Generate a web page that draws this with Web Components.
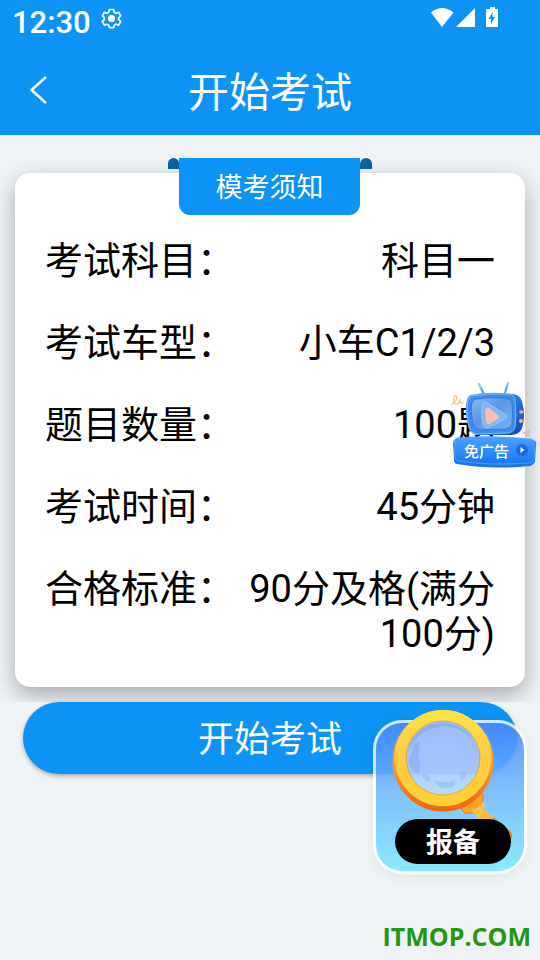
<!DOCTYPE html>
<html lang="zh-CN">
<head>
<meta charset="utf-8">
<meta name="viewport" content="width=device-width, initial-scale=1">
<title>开始考试</title>
<style>
  body { margin: 0; background: #eff3f5; font-family: Roboto, "Noto Sans CJK SC", sans-serif; color: #000; }
</style>
</head>
<body>
<exam-page></exam-page>
<script>
const define = (name, html) => customElements.define(name, class extends HTMLElement {
  constructor() {
    super();
    const t = document.createElement('template');
    t.innerHTML = '<style>*{box-sizing:border-box}button{font:inherit;color:inherit;border:0;background:none;padding:0;margin:0;cursor:pointer}svg{display:block}</style>' + html;
    this.attachShadow({ mode: 'open' }).append(t.content.cloneNode(true));
  }
});

define('status-bar', `
<style>
  :host { display: flex; height: 45px; padding: 0 42px 0 12px; justify-content: space-between; align-items: flex-start; background: #0c93f5; color: #fff; }
  .side { display: flex; }
  time { font-size: 31px; font-weight: 500; line-height: 46px; }
  .gear { margin: 8px 0 0 10px; }
</style>
<div class="side">
  <time>12:30</time>
  <svg class="gear" width="21" height="21" viewBox="0 0 21 21" fill="none" stroke="#fff" stroke-width="1.7" stroke-linejoin="round">
    <path d="M8.3 1.5h4.4l.5 2.7 1.8 1 2.6-.9 2.1 3.6-2 1.8v2l2 1.8-2.1 3.6-2.6-.9-1.8 1-.5 2.5H8.3l-.5-2.5-1.8-1-2.6.9-2.1-3.6 2-1.8v-2l-2-1.8 2.1-3.6 2.6.9 1.8-1z"/>
    <circle cx="10.5" cy="10.6" r="3.5" fill="#fff" stroke="none"/>
  </svg>
</div>
<svg width="68" height="28" viewBox="0 0 68 28" fill="#fff" role="img" aria-label="信号与电量">
  <path d="M1 12.5Q12 3.500 23.500 12.500L12 27z"/>
  <path d="M26 27L45 8V27z"/>
  <path fill-rule="evenodd" d="M57 9h3V7h5v2h3v18H56V10q0-1 1-1zM62.500 12l-4 7h2.500v5l4-7h-2.500z"/>
</svg>`);

define('title-bar', `
<style>
  :host { display: grid; grid-template-columns: 76px 1fr 76px; align-items: center; height: 90px; background: #0c93f5; color: #fff; }
  h1 { margin: 0; padding-top: 6px; text-align: center; font-size: 41px; font-weight: 400; line-height: 60px; }
  button { display: grid; place-items: center; height: 60px; }
</style>
<button type="button" aria-label="返回"><svg width="18" height="28" viewBox="0 0 18 28" fill="none" stroke="#fff" stroke-width="2.500"><path d="M17 1L2.500 14 17 27"/></svg></button>
<h1><slot></slot></h1>`);

define('ribbon-heading', `
<style>
  :host { display: grid; grid-template-columns: 11px 181px 12px; justify-content: center; }
  h2 { margin: 0; padding-top: 3px; border-radius: 0 0 11px 11px; background: #0c93f5; color: #fff; text-align: center; font-size: 27px; font-weight: 400; line-height: 54px; }
  i { height: 11px; background: linear-gradient(90deg, #0866a8, #055d9b); }
  .l { border-radius: 6px 6px 0 0; } .r { border-radius: 6px 6px 0 0; }
</style>
<i class="l"></i><h2><slot></slot></h2><i class="r"></i>`);

define('info-row', `
<style>
  :host { display: block; }
  dl { display: flex; justify-content: space-between; gap: 12px; margin: 0; font-size: 38px; line-height: 45px; }
  dt { flex: none; } dd { margin: 0; text-align: right; }
</style>
<dl><dt><slot name="label"></slot></dt><dd><slot></slot></dd></dl>`);

define('notice-card', `
<style>
  :host { display: block; padding: 38px 15px 15px; overflow: hidden; }
  section { display: flow-root; border-radius: 15px; background: #fff; box-shadow: 0 8px 22px rgba(0,0,0,.3); padding: 0 30px 30px; }
  .head { margin: -15px 0 24px; }
  .rows { display: grid; gap: 37px; }
</style>
<section>
  <div class="head"><slot name="heading"></slot></div>
  <div class="rows"><slot></slot></div>
</section>`);

define('start-button', `
<style>
  :host { display: block; padding: 0 23px; }
  button { width: 100%; padding-top: 4px; border-radius: 36px; background: #0c93f5; color: #fff; font-size: 36px; line-height: 68px; box-shadow: 0 2px 4px rgba(0,0,0,.3); }
</style>
<button type="button"><slot></slot></button>`);

define('ad-free', `
<style>
  :host { display: block; width: 88px; }
  button { display: grid; width: 100%; }
  svg, span { grid-area: 1 / 1; }
  span { align-self: end; justify-self: start; padding: 0 0 6px 13px; color: #fff; font-size: 15px; font-weight: 500; line-height: 20px; }
</style>
<button type="button">
<svg width="88" height="90" viewBox="0 0 88 90" aria-hidden="true">
  <defs>
    <linearGradient id="tv" x1="0" y1="0" x2="1" y2="1"><stop offset="0" stop-color="#62b5fa"/><stop offset=".5" stop-color="#2878ed"/><stop offset="1" stop-color="#1745b6"/></linearGradient>
    <linearGradient id="glass" x1="0" y1="0" x2="1" y2="1"><stop offset="0" stop-color="#8bbcf6"/><stop offset=".45" stop-color="#5c95e6"/><stop offset="1" stop-color="#7ab3f5"/></linearGradient>
    <linearGradient id="sign" x1="0" y1="0" x2="0" y2="1"><stop offset="0" stop-color="#4aa2ff"/><stop offset="1" stop-color="#1877ef"/></linearGradient>
  </defs>
  <g fill="none" stroke-linecap="round">
    <path d="M34 18L28 6M53 18l4-13" stroke="#569ee9" stroke-width="2"/>
    <path d="M28 6l2 3M57 5l-1 2" stroke="#a6d1f6" stroke-width="2"/>
    <path d="M1 26c4-2 6-7 4-8s-4 7-1 8 5-2 5-5c-1 4 1 5 4 3" stroke="#efc97c" stroke-width="1.300"/>
    <path d="M72 55l7-3-3 6-1-3zM76 58l3-1" stroke="#f5aaa6"/>
  </g>
  <path d="M19 17Q38 13 62 16 69 17 71 23 75 39 71 50 69 56 61 57L26 57Q19 56 17 48 13 30 16 22 16 19 19 17z" fill="url(#tv)"/>
  <path d="M20 18Q38 15 58 16 64 17 64 23 66 38 64 49 63 54 57 55L27 56Q20 56 18 49 15 33 17 23z" fill="#3f8cf0" stroke="#7fbaf7"/>
  <path d="M24 21Q38 19 55 20 60 21 61 25 62 37 61 46 60 50 55 51L29 52Q24 51 22 46 19 31 21 25z" fill="url(#glass)" stroke="#3576d6"/>
  <path d="M31 27Q32 23 36 25L54 36Q58 38 54 41L37 50Q34 51 32 47 30 38 31 27z" fill="#82b5f5" stroke="#9bc9fa"/>
  <path d="M34 33Q35 28 38 30L47 37Q49 39 47 41L39 46Q36 47 35 43z" fill="#f8bdb4"/>
  <circle cx="70" cy="34" r="2" fill="#ef849c"/><circle cx="71" cy="34" r="1" fill="#ffd3c7"/>
  <circle cx="70" cy="43" r="2" fill="#f8bd72"/>
  <path d="M5 61Q38 56 82 62 86 63 85 67L84 83Q83 87 79 88 40 92 6 86 3 85 3 82L2 66Q2 62 5 61z" fill="#1c74e9"/>
  <path d="M6 60Q38 57 80 61 84 62 84 66L83 80Q83 84 78 85 38 88 7 83 4 82 4 79L3 65Q3 61 6 60z" fill="url(#sign)" stroke="#55a7ff" stroke-width=".8"/>
  <circle cx="71" cy="72" r="6" fill="#176cdb"/><path d="M69.500 69l4 3-4 3z" fill="#fff"/>
</svg>
<span>免广告</span>
</button>`);

define('report-float', `
<style>
  :host { display: block; width: 154px; }
  button { display: grid; width: 100%; height: 164px; }
  svg, .tile, .label { grid-area: 1 / 1; }
  .tile { align-self: end; height: 154px; border: 3px solid rgba(255,255,255,.8); border-radius: 29px; background: linear-gradient(rgba(75,135,255,.88), rgba(110,185,255,.86) 48%, rgba(133,232,255,.96)); background-clip: padding-box; box-shadow: 0 3px 12px rgba(0,0,0,.06); }
  .label { align-self: end; justify-self: start; margin: 0 0 10px 22px; padding-top: 3px; width: 116px; height: 45px; border-radius: 23px; background: #000; color: #fff; font-size: 27px; font-weight: 700; line-height: 42px; text-align: center; z-index: 1; }
</style>
<button type="button">
<span class="tile"></span>
<svg width="154" height="164" viewBox="0 0 154 164" aria-hidden="true">
  <defs>
    <linearGradient id="rim" x1="0" y1="0" x2="0" y2="1"><stop offset="0" stop-color="#ffe044"/><stop offset=".5" stop-color="#ffcb45"/><stop offset="1" stop-color="#ffd036"/></linearGradient>
    <linearGradient id="edge" x1="0" y1="0" x2="0" y2="1"><stop offset="0" stop-color="#ffd630"/><stop offset=".55" stop-color="#f99a20"/><stop offset="1" stop-color="#ee640d"/></linearGradient>
    <linearGradient id="lens" x1="0" y1="0" x2="0" y2="1"><stop offset="0" stop-color="#9bbcfb"/><stop offset=".69" stop-color="#a4c5fb"/><stop offset=".7" stop-color="#b1d4fe"/><stop offset="1" stop-color="#b6e0ff"/></linearGradient>
    <linearGradient id="handle" x1="0" y1="0" x2="1" y2="1"><stop offset="0" stop-color="#ffcd48"/><stop offset="1" stop-color="#fa8616"/></linearGradient>
  </defs>
  <path d="M88 99L109 83Q112 90 107 97 101 105 92 103z" fill="#fba52c" stroke="#ed7510"/>
  <path d="M98 100Q105 99 110 92L112 96Q108 102 101 104z" fill="#ffc24b"/>
  <path d="M102 102Q106 102 109 98L137 121Q140 124 139 128L135 132 106 112z" fill="url(#handle)"/>
  <path d="M120 107L137 121Q140 124 139 128 136 124 120 113z" fill="#fd7f12"/>
  <circle cx="70" cy="51" r="50.500" fill="url(#edge)"/>
  <circle cx="70" cy="48" r="42.500" fill="url(#lens)" stroke="url(#rim)" stroke-width="11.500"/>
  <circle cx="70" cy="48" r="37" fill="none" stroke="#e78c31" stroke-opacity=".65"/>
  <path d="M35 43Q40 14 70 13 98 14 106 45 99 18 72 16 44 18 35 43z" fill="#7394d9" opacity=".4"/>
  <path d="M41 34q5-6 6-1-3 11 0 19 1 12-3 11-9-5-8-14 4-8 5-15z" fill="#7da5ed" opacity=".45"/>
  <path d="M49 65q8-2 9 6-7 2-9-6zM61 70q11 4 21 0 2 7-6 8-11 2-15-8zM87 64q5-6 6 1-2 7-6 4z" fill="#83b7f7" opacity=".5"/>
</svg>
<span class="label">报备</span>
</button>`);

define('exam-page', `
<style>
  :host { display: block; position: relative; min-height: 100vh; }
  ad-free { position: absolute; right: 1px; top: 378px; }
  report-float { position: absolute; right: 13px; top: 710px; }
  footer { position: absolute; right: 9px; bottom: 8px; font: 700 25px/32px "Open Sans", "Noto Sans", sans-serif; color: #259614; }
</style>
<header><status-bar></status-bar><title-bar>开始考试</title-bar></header>
<main>
  <notice-card>
    <ribbon-heading slot="heading">模考须知</ribbon-heading>
    <info-row><span slot="label">考试科目：</span>科目一</info-row>
    <info-row><span slot="label">考试车型：</span>小车C1/2/3</info-row>
    <info-row><span slot="label">题目数量：</span>100题</info-row>
    <info-row><span slot="label">考试时间：</span>45分钟</info-row>
    <info-row><span slot="label">合格标准：</span>90分及格(满分100分)</info-row>
  </notice-card>
  <start-button>开始考试</start-button>
</main>
<ad-free></ad-free>
<report-float></report-float>
<footer>ITMOP.COM</footer>`);
</script>
</body>
</html>
